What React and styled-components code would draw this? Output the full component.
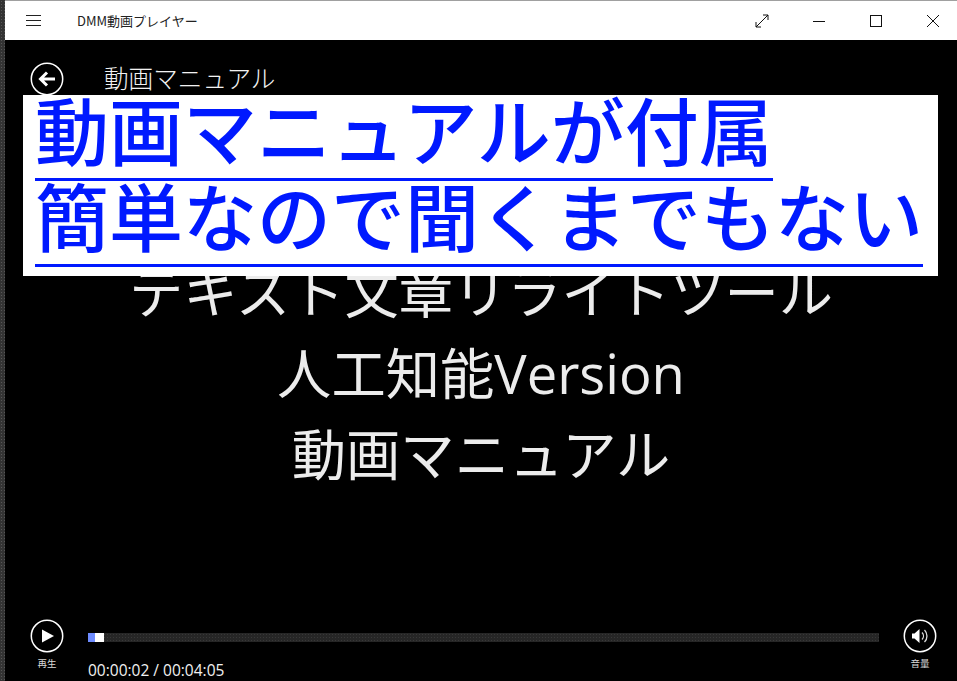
import React from "react";
import styled, { createGlobalStyle } from "styled-components";

const Global = createGlobalStyle`
  html, body { margin: 0; padding: 0; background: #000; }
  body { font-family: "Noto Sans CJK JP", "Noto Sans", sans-serif; }
  * { box-sizing: border-box; }
`;

const Screen = styled.div`
  position: relative;
  width: 957px;
  height: 681px;
  overflow: hidden;
  display: flex;
  background: #000;
`;

const DesktopEdge = styled.div`
  width: 5px;
  flex: none;
  background-color: #333;
  background-image: radial-gradient(#565656 0.6px, transparent 0.7px);
  background-size: 3px 3px;
`;

const Window = styled.div`
  flex: 1;
  min-width: 0;
  display: flex;
  flex-direction: column;
`;

const TitleBar = styled.div`
  height: 40px;
  flex: none;
  background: #fff;
  border-top: 1px solid #a0a0a0;
  display: flex;
  align-items: center;
  color: #222;
`;

const Hamburger = styled.svg`
  width: 15px;
  height: 12px;
  margin-left: 21px;
  flex: none;
`;

const AppName = styled.div`
  margin-left: 36px;
  font-size: 13px;
  line-height: 18px;
  flex: 1;
`;

const WinButton = styled.svg`
  width: 14px;
  height: 14px;
  margin-right: ${(p) => p.$gap}px;
  flex: none;
`;

const Header = styled.div`
  height: 76px;
  flex: none;
  padding: 22px 0 0 25px;
  display: flex;
  align-items: flex-start;
  color: #fff;
`;

const Round = styled.svg`
  width: 34px;
  height: 34px;
  display: block;
  flex: none;
`;

const PageTitle = styled.div`
  margin-left: 40px;
  margin-top: -2px;
  font-size: 24.6px;
  line-height: 34px;
  font-weight: 300;
  color: #f2f2f2;
`;

const Stage = styled.div`
  flex: 1;
  padding-top: 136px;
  display: flex;
  flex-direction: column;
  align-items: center;
  color: #ececec;
  font-family: "Open Sans", "Noto Sans CJK JP", sans-serif;
  font-size: 54.3px;
  font-weight: 400;
  line-height: 81px;
  white-space: nowrap;
`;

const Controls = styled.div`
  height: 74px;
  flex: none;
  padding-top: 12px;
  display: flex;
  color: #fff;
`;

const RoundControl = styled.div`
  width: 50px;
  flex: none;
  margin-left: ${(p) => p.$left}px;
  display: flex;
  flex-direction: column;
  align-items: center;
  color: #d8d8d8;
  font-size: 9.5px;
  line-height: 14px;
`;

const ControlLabel = styled.div`
  margin-top: 3px;
`;

const SeekColumn = styled.div`
  width: 791px;
  margin-left: 16px;
  padding-top: 14px;
`;

const Track = styled.div`
  height: 9px;
  display: flex;
  background-color: #262626;
  background-image: radial-gradient(#383838 0.6px, transparent 0.7px);
  background-size: 3px 3px;
`;

const Fill = styled.div`
  height: 100%;
  width: ${(p) => p.$w}px;
  background: ${(p) => p.$c};
`;

const Time = styled.div`
  margin-top: 18px;
  font-size: 15.5px;
  line-height: 20px;
  font-family: "Open Sans", "Noto Sans CJK JP", sans-serif;
  color: #f0f0f0;
`;

const Banner = styled.div`
  position: absolute;
  left: 23px;
  top: 95px;
  width: 915px;
  height: 181px;
  background: #fff;
  color: #0019ff;
  padding: 0 0 0 12px;
  font-size: 74px;
  font-weight: 500;
  white-space: nowrap;
  display: flex;
  flex-direction: column;
  align-items: flex-start;
`;

const BannerLine = styled.div`
  height: 86px;
  line-height: 66px;
  border-bottom: 3px solid #0019ff;
`;

export default function App() {
  return (
    <Screen>
      <Global />
      <DesktopEdge />
      <Window>
        <TitleBar>
          <Hamburger viewBox="0 0 15 12">
            <path d="M0 .5h15M0 5.5h15M0 10.5h15" stroke="#222" fill="none" />
          </Hamburger>
          <AppName>DMM動画プレイヤー</AppName>
          <WinButton $gap={43} viewBox="0 0 14 14">
            <path d="M1 13 13 1M8 1h5v5M1 8v5h5" stroke="#111" fill="none" />
          </WinButton>
          <WinButton $gap={43} viewBox="0 0 14 14">
            <path d="M1 7.5h12" stroke="#111" fill="none" />
          </WinButton>
          <WinButton $gap={43} viewBox="0 0 14 14">
            <rect x="1.5" y="1.5" width="11" height="11" stroke="#111" fill="none" />
          </WinButton>
          <WinButton $gap={17} viewBox="0 0 14 14">
            <path d="M1 1l12 12M13 1 1 13" stroke="#111" fill="none" />
          </WinButton>
        </TitleBar>
        <Header>
          <Round viewBox="0 0 34 34">
            <circle cx="17" cy="17" r="15.7" stroke="#fff" strokeWidth="1.5" fill="none" />
            <path d="M25 17H11M17 10.5 10.5 17l6.5 6.5" stroke="#fff" strokeWidth="3" fill="none" />
          </Round>
          <PageTitle>動画マニュアル</PageTitle>
        </Header>
        <Stage>
          <div>テキスト文章リライトツール</div>
          <div>人工知能Version</div>
          <div>動画マニュアル</div>
        </Stage>
        <Controls>
          <RoundControl $left={17}>
            <Round viewBox="0 0 34 34">
              <circle cx="17" cy="17" r="15.7" stroke="#fff" strokeWidth="1.5" fill="none" />
              <path d="M12 10.5v13L24 17z" fill="#fff" />
            </Round>
            <ControlLabel>再生</ControlLabel>
          </RoundControl>
          <SeekColumn>
            <Track>
              <Fill $w={7} $c="#6e8cff" />
              <Fill $w={9} $c="#fff" />
            </Track>
            <Time>00:00:02 / 00:04:05</Time>
          </SeekColumn>
          <RoundControl $left={16}>
            <Round viewBox="0 0 34 34">
              <circle cx="17" cy="17" r="15.7" stroke="#fff" strokeWidth="1.5" fill="none" />
              <path d="M9 14.5h2.5l5-4.5v14l-5-4.5H9z" fill="#fff" />
              <path d="M19 13.5a5 5 0 0 1 0 7M21.5 11a8.5 8.5 0 0 1 0 12" stroke="#ddd" strokeWidth="1.3" fill="none" />
            </Round>
            <ControlLabel>音量</ControlLabel>
          </RoundControl>
        </Controls>
      </Window>
      <Banner>
        <BannerLine>動画マニュアルが付属</BannerLine>
        <BannerLine>簡単なので聞くまでもない</BannerLine>
      </Banner>
    </Screen>
  );
}
